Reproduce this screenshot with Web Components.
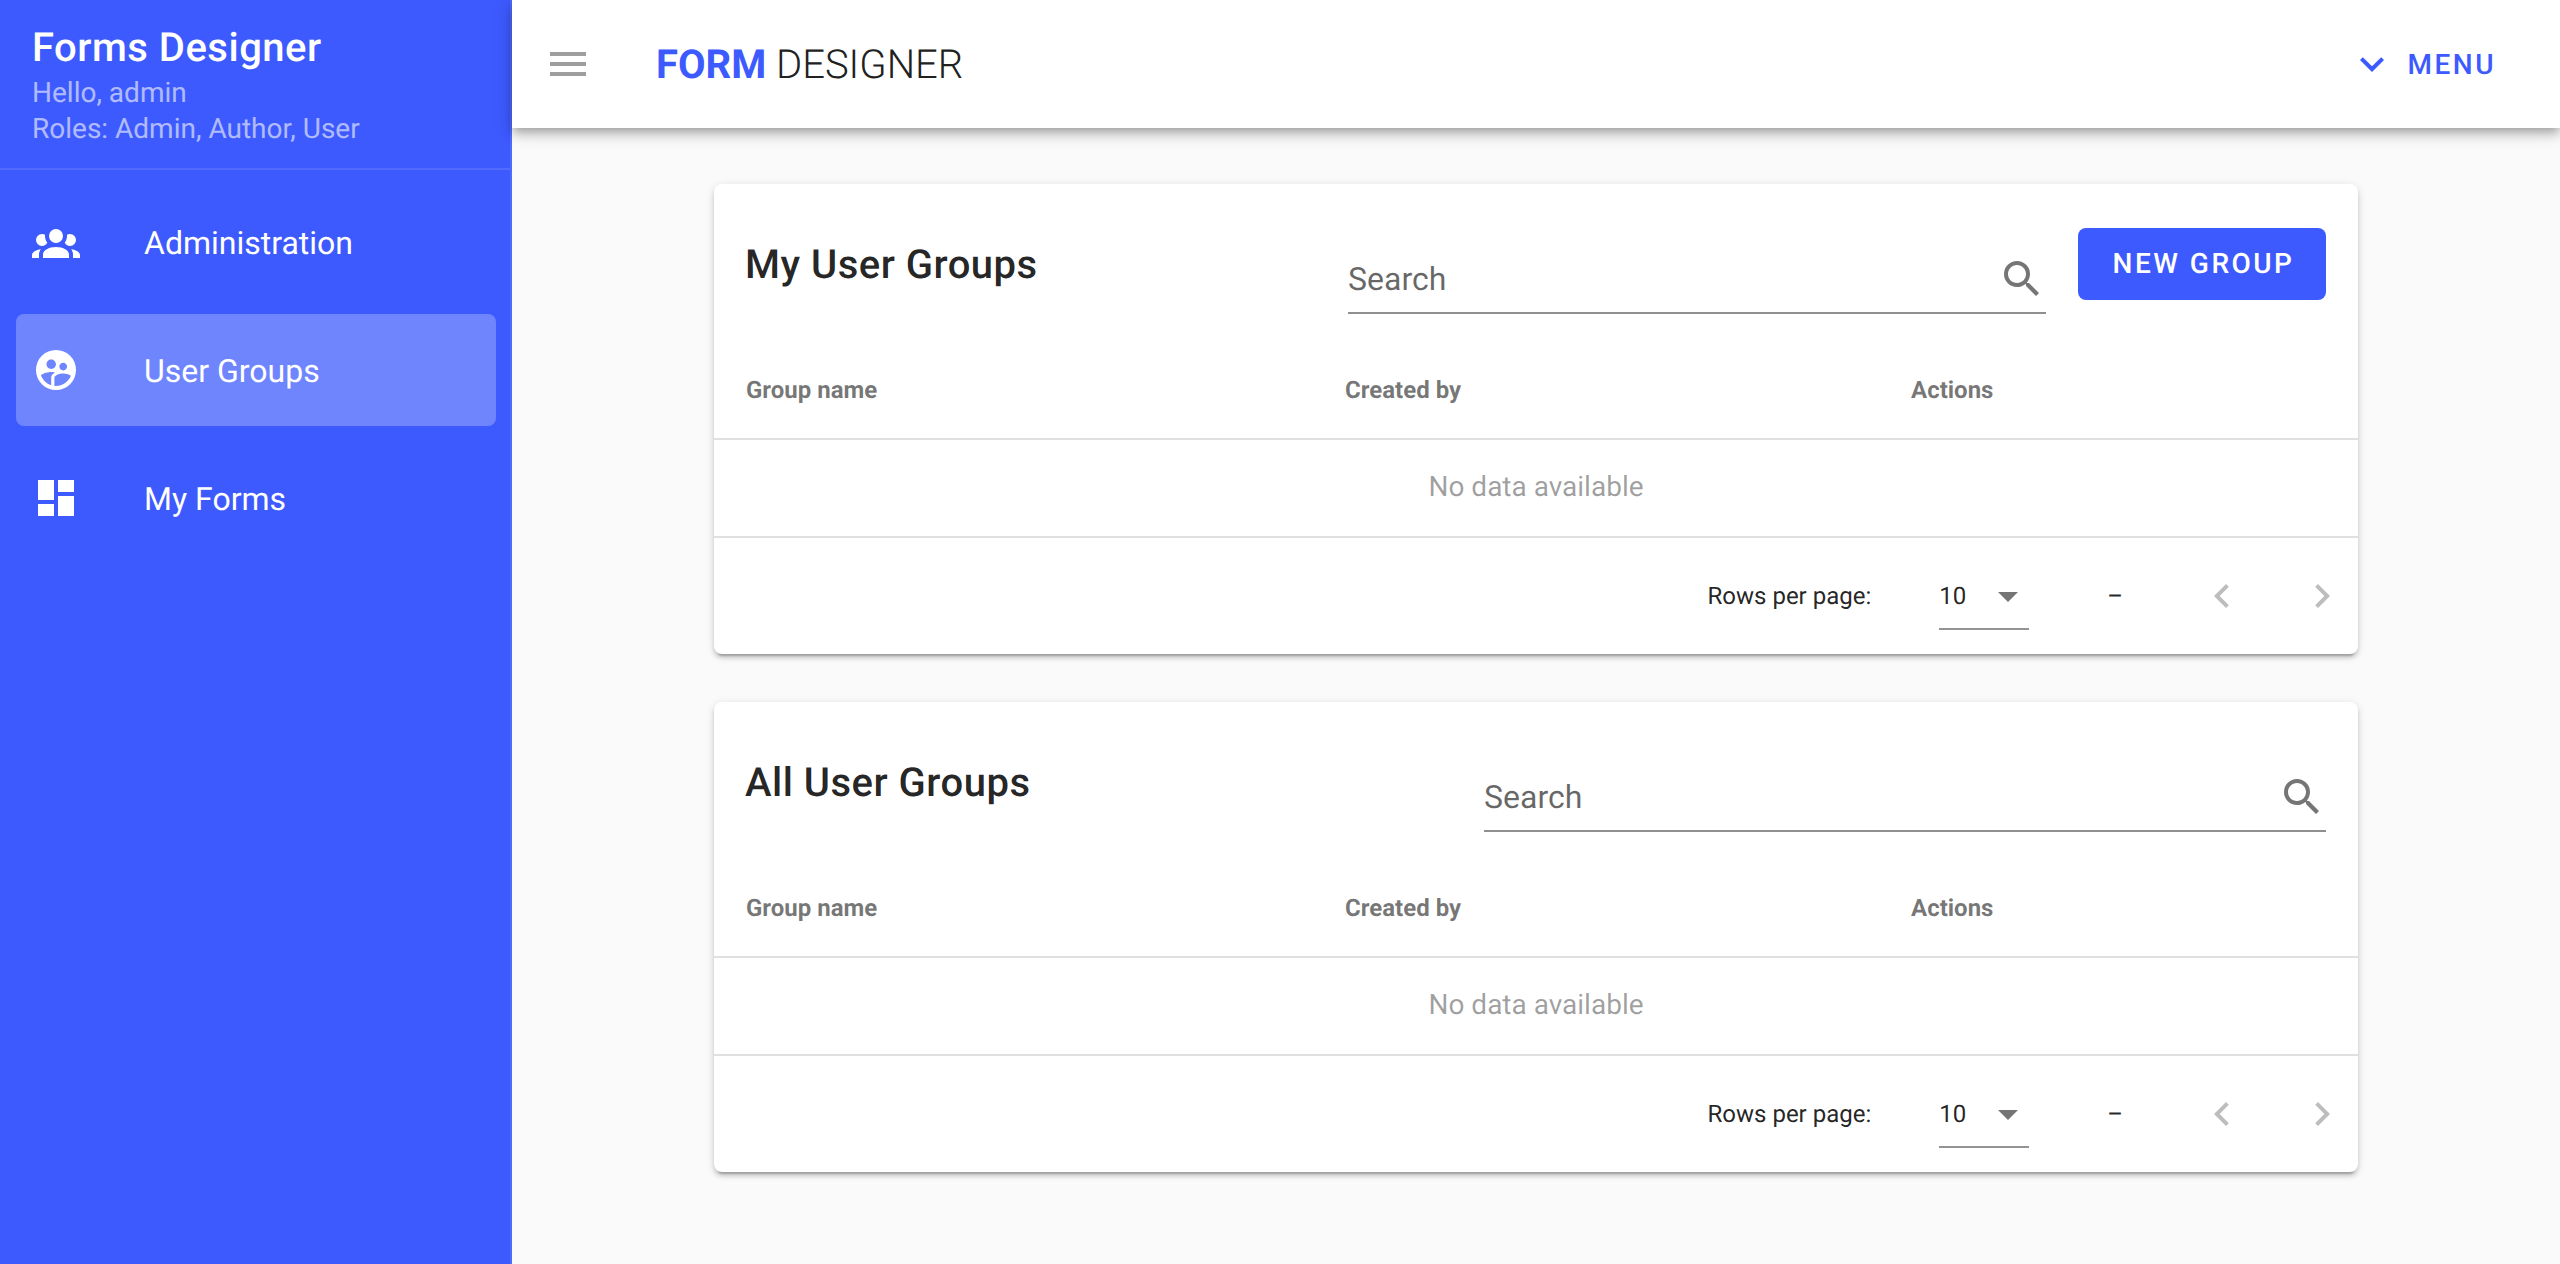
<!DOCTYPE html>
<html lang="en">
<head>
<meta charset="utf-8">
<title>Forms Designer</title>
<style>
  html, body { margin: 0; height: 100%; }
  body { font-family: Roboto, "Liberation Sans", sans-serif; background: #fafafa; overflow: hidden; text-rendering: geometricPrecision; }
</style>
</head>
<body>
<app-shell>
  <nav-drawer slot="drawer" heading="Forms Designer" greeting="Hello, admin" roles="Roles: Admin, Author, User">
    <nav-item icon="group" label="Administration"></nav-item>
    <nav-item icon="circle" label="User Groups" active></nav-item>
    <nav-item icon="dashboard" label="My Forms"></nav-item>
  </nav-drawer>
  <top-bar slot="bar"></top-bar>
  <group-card heading="My User Groups" style="--search-width: 698px">
    <new-button slot="action">NEW GROUP</new-button>
  </group-card>
  <group-card heading="All User Groups" style="--search-width: 842px"></group-card>
</app-shell>

<script>
const ICONS = {
  group: 'M12,5.5A3.5,3.5 0 0,1 15.5,9A3.5,3.5 0 0,1 12,12.5A3.5,3.5 0 0,1 8.5,9A3.5,3.5 0 0,1 12,5.5M5,8C5.56,8 6.08,8.15 6.53,8.42C6.38,9.85 6.8,11.27 7.66,12.38C7.16,13.34 6.16,14 5,14A3,3 0 0,1 2,11A3,3 0 0,1 5,8M19,8A3,3 0 0,1 22,11A3,3 0 0,1 19,14C17.84,14 16.84,13.34 16.34,12.38C17.2,11.27 17.62,9.85 17.47,8.42C17.92,8.15 18.44,8 19,8M5.5,18.25C5.5,16.18 8.41,14.5 12,14.5C15.59,14.5 18.5,16.18 18.5,18.25V20H5.5V18.25M0,20V18.5C0,17.11 1.89,15.94 4.45,15.6C3.86,16.28 3.5,17.22 3.5,18.25V20H0M24,20H20.5V18.25C20.5,17.22 20.14,16.28 19.55,15.6C22.11,15.94 24,17.11 24,18.5V20Z',
  circle: 'M12,2A10,10 0 0,1 22,12A10,10 0 0,1 12,22A10,10 0 0,1 2,12A10,10 0 0,1 12,2M15.6,8.34C14.53,8.34 13.66,9.2 13.67,10.27C13.67,11.34 14.53,12.2 15.6,12.2C16.67,12.2 17.53,11.34 17.53,10.27C17.53,9.2 16.67,8.34 15.6,8.34M9.6,6.76C8.29,6.76 7.24,7.81 7.24,9.12C7.24,10.42 8.3,11.48 9.6,11.48C10.9,11.48 11.96,10.42 11.96,9.12C11.96,7.82 10.9,6.76 9.6,6.76M9.6,15.89V19.64C7.2,18.89 5.3,17.04 4.46,14.68C5.51,13.56 8.13,13 9.6,13C10.13,13 10.8,13.07 11.5,13.21C9.86,14.08 9.6,15.23 9.6,15.89M11.99,20C11.72,20 11.46,20 11.2,19.96V15.89C11.2,14.47 14.14,13.76 15.6,13.76C16.67,13.76 18.5,14.15 19.44,14.91C18.27,17.88 15.38,20 11.99,20Z',
  dashboard: 'M13,3V9H21V3M13,21H21V11H13M3,21H11V15H3M3,13H11V3H3V13Z',
  menu: 'M3,6H21V8H3V6M3,11H21V13H3V11M3,16H21V18H3V16Z',
  search: 'M9.5,3A6.5,6.5 0 0,1 16,9.5C16,11.11 15.41,12.59 14.44,13.73L14.71,14H15.5L20.5,19L19,20.5L14,15.5V14.71L13.73,14.44C12.59,15.41 11.11,16 9.5,16A6.5,6.5 0 0,1 3,9.5A6.5,6.5 0 0,1 9.5,3M9.5,5C7,5 5,7 5,9.5C5,12 7,14 9.5,14C12,14 14,12 14,9.5C14,7 12,5 9.5,5Z',
  down: 'M7.41,8.58L12,13.17L16.59,8.58L18,10L12,16L6,10L7.41,8.58Z',
  left: 'M15.41,16.58L10.83,12L15.41,7.41L14,6L8,12L14,18L15.41,16.58Z',
  right: 'M8.59,16.58L13.17,12L8.59,7.41L10,6L16,12L10,18L8.59,16.58Z',
  caret: 'M7,10L12,15L17,10H7Z',
};

function icon(name) {
  return `<svg class="icon" viewBox="0 0 24 24" width="48" height="48" fill="currentColor" fill-rule="evenodd" aria-hidden="true"><path d="${ICONS[name]}"/></svg>`;
}

class AppShell extends HTMLElement {
  connectedCallback() {
    if (this.shadowRoot) return;
    this.attachShadow({ mode: 'open' }).innerHTML = `
      <style>
        :host { display: flex; height: 100vh; background: #fafafa; }
        .side { flex: 0 0 512px; display: flex; }
        .main { flex: 1; min-width: 0; display: flex; flex-direction: column; }
        .content { display: flex; flex-direction: column; gap: 48px; padding: 56px 202px; }
      </style>
      <div class="side"><slot name="drawer"></slot></div>
      <div class="main">
        <slot name="bar"></slot>
        <div class="content"><slot></slot></div>
      </div>`;
  }
}

class NavDrawer extends HTMLElement {
  connectedCallback() {
    if (this.shadowRoot) return;
    this.attachShadow({ mode: 'open' }).innerHTML = `
      <style>
        :host { display: block; flex: 1; box-sizing: border-box; background: #3d5afe; border-right: 2px solid #4f6afe; color: #fff; }
        .head { height: 170px; box-sizing: border-box; padding: 26px 32px 0; border-bottom: 2px solid #506bfe; }
        h1 { margin: 0; font: 500 40px/44px Roboto, sans-serif; letter-spacing: 0.5px; }
        p { margin: 0; font: 400 28px/36px Roboto, sans-serif; color: rgba(255, 255, 255, 0.6); }
        h1 + p { margin-top: 5px; }
        nav { display: flex; flex-direction: column; gap: 16px; padding: 16px 14px 16px 16px; }
      </style>
      <div class="head">
        <h1>${this.getAttribute('heading')}</h1>
        <p>${this.getAttribute('greeting')}</p>
        <p>${this.getAttribute('roles')}</p>
      </div>
      <nav><slot></slot></nav>`;
  }
}

class NavItem extends HTMLElement {
  connectedCallback() {
    if (this.shadowRoot) return;
    this.attachShadow({ mode: 'open' }).innerHTML = `
      <style>
        :host { display: flex; align-items: center; height: 112px; padding: 0 16px; border-radius: 8px; font: 400 32px/40px Roboto, sans-serif; color: #fff; }
        :host([active]) { background: #6f85fe; }
        .icon { margin-right: 64px; flex: none; }
        span { margin-top: 2px; }
      </style>
      ${icon(this.getAttribute('icon'))}
      <span>${this.getAttribute('label')}</span>`;
  }
}

class TopBar extends HTMLElement {
  connectedCallback() {
    if (this.shadowRoot) return;
    this.attachShadow({ mode: 'open' }).innerHTML = `
      <style>
        :host { display: flex; align-items: center; height: 128px; padding: 0 64px 0 32px; background: #fff; position: relative; z-index: 2;
          box-shadow: 0 4px 8px -2px rgba(0,0,0,.2), 0 8px 10px 0 rgba(0,0,0,.14), 0 2px 20px 0 rgba(0,0,0,.12); }
        .burger { color: #9e9e9e; display: flex; }
        .title { margin: 2px 0 0 64px; font: 300 40px/48px Roboto, sans-serif; color: #212121; }
        .title b { font-weight: 700; color: #3d5afe; }
        .menu { margin-left: auto; display: flex; align-items: center; gap: 12px; color: #3d5afe; font: 500 28px/36px Roboto, sans-serif; letter-spacing: 2.5px; }
        .menu span { margin-top: 2px; }
      </style>
      <span class="burger">${icon('menu')}</span>
      <span class="title"><b>FORM</b> DESIGNER</span>
      <span class="menu">${icon('down')}<span>MENU</span></span>`;
  }
}

class NewButton extends HTMLElement {
  connectedCallback() {
    if (this.shadowRoot) return;
    this.attachShadow({ mode: 'open' }).innerHTML = `
      <style>
        :host { display: flex; align-items: center; justify-content: center; box-sizing: border-box; width: 248px; height: 72px; padding-left: 3px; margin-left: 32px; border-radius: 8px; background: #3d5afe; color: #fff; font: 500 28px/1 Roboto, sans-serif; letter-spacing: 2.5px; }
      </style>
      <slot></slot>`;
  }
}

class SearchField extends HTMLElement {
  connectedCallback() {
    if (this.shadowRoot) return;
    this.attachShadow({ mode: 'open' }).innerHTML = `
      <style>
        :host { display: flex; align-items: center; justify-content: space-between; box-sizing: border-box; height: 62px; padding-bottom: 6px; border-bottom: 2px solid #8f8f8f; margin-top: 24px; color: rgba(0,0,0,.6); font: 400 32px/40px Roboto, sans-serif; }
        .icon { color: #757575; }
      </style>
      <span>Search</span>${icon('search')}`;
  }
}

class DataFooter extends HTMLElement {
  connectedCallback() {
    if (this.shadowRoot) return;
    this.attachShadow({ mode: 'open' }).innerHTML = `
      <style>
        :host { display: flex; align-items: center; justify-content: flex-end; height: 116px; font: 400 24px/32px Roboto, sans-serif; color: rgba(0,0,0,.87); }
        .select { display: flex; align-items: center; justify-content: space-between; box-sizing: border-box; width: 90px; height: 68px; padding-top: 2px; margin-left: 68px; border-bottom: 2px solid #949494; }
        .select .icon { color: #757575; margin-right: -3px; }
        .range { margin: 0 63px 0 78px; }
        .pager { display: flex; width: 72px; justify-content: center; color: #bdbdbd; }
        .pager + .pager { margin-left: 28px; }
      </style>
      <span>Rows per page:</span>
      <span class="select"><span>10</span>${icon('caret')}</span>
      <span class="range">–</span>
      <span class="pager">${icon('left')}</span>
      <span class="pager">${icon('right')}</span>`;
  }
}

class GroupCard extends HTMLElement {
  connectedCallback() {
    if (this.shadowRoot) return;
    this.attachShadow({ mode: 'open' }).innerHTML = `
      <style>
        :host { display: block; background: #fff; border-radius: 8px; color: rgba(0,0,0,.87);
          box-shadow: 0 6px 2px -4px rgba(0,0,0,.2), 0 4px 4px 0 rgba(0,0,0,.14), 0 2px 10px 0 rgba(0,0,0,.12); }
        .top { display: flex; align-items: flex-start; height: 158px; box-sizing: border-box; padding: 44px 32px 0; }
        h2 { flex: 1; margin: 0 0 0 -1px; font: 500 40px/74px Roboto, sans-serif; letter-spacing: 0.5px; }
        search-field { width: var(--search-width); }
        .row { display: grid; grid-template-columns: 599px 566px 1fr; align-items: center; height: 96px; border-bottom: 2px solid #e0e0e0; }
        .row span { padding-left: 32px; }
        .head { font: 700 24px/32px Roboto, sans-serif; color: rgba(0,0,0,.55); }
        .empty { display: flex; align-items: center; justify-content: center; height: 94px; padding-bottom: 2px; border-bottom: 2px solid #e0e0e0; font: 400 28px/36px Roboto, sans-serif; color: rgba(0,0,0,.38); }
      </style>
      <div class="top">
        <h2>${this.getAttribute('heading')}</h2>
        <search-field></search-field>
        <slot name="action"></slot>
      </div>
      <div class="row head"><span>Group name</span><span>Created by</span><span>Actions</span></div>
      <div class="empty">No data available</div>
      <data-footer></data-footer>`;
  }
}

customElements.define('app-shell', AppShell);
customElements.define('nav-drawer', NavDrawer);
customElements.define('nav-item', NavItem);
customElements.define('top-bar', TopBar);
customElements.define('new-button', NewButton);
customElements.define('search-field', SearchField);
customElements.define('data-footer', DataFooter);
customElements.define('group-card', GroupCard);
</script>
</body>
</html>
